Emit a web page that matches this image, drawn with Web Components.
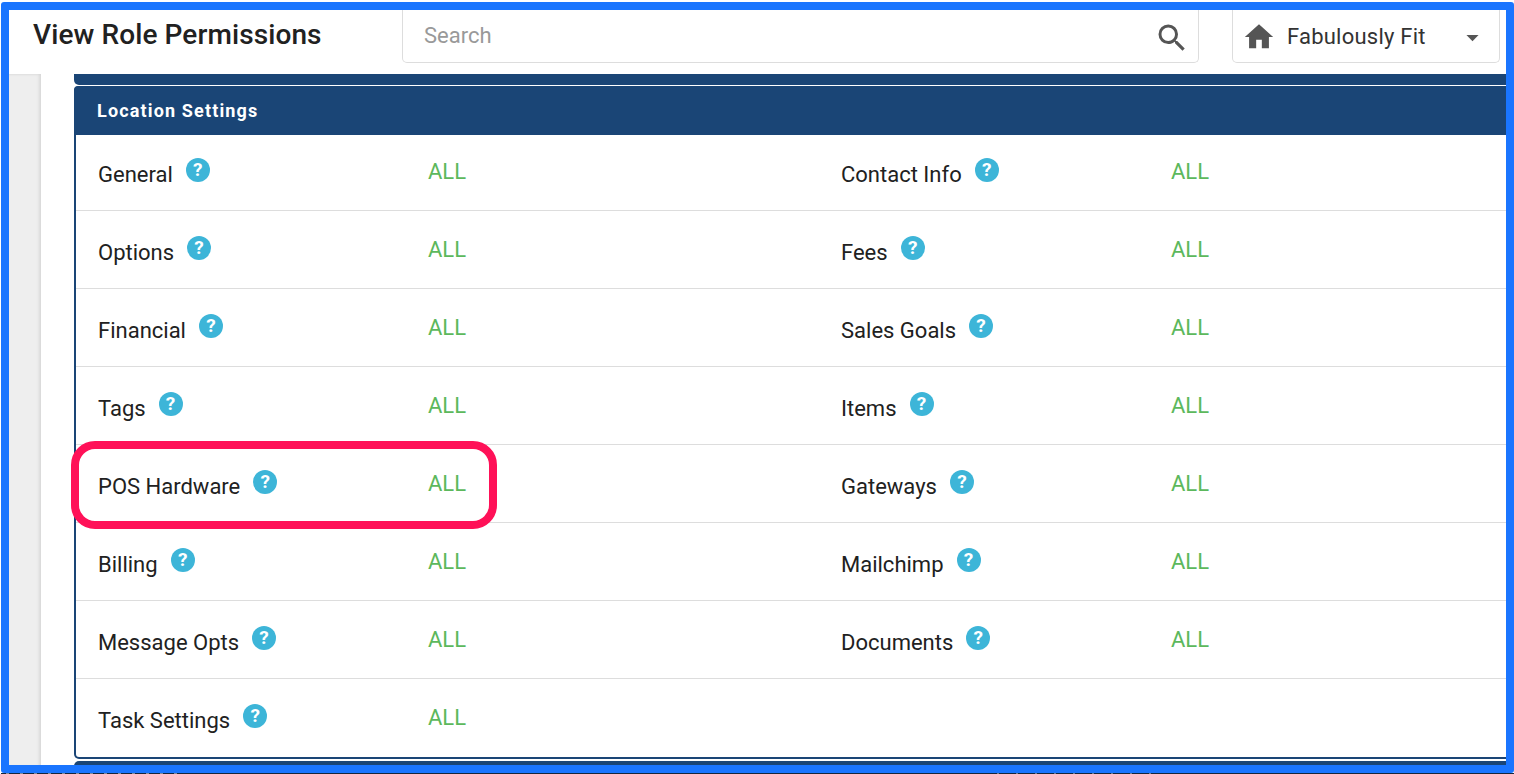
<!DOCTYPE html>
<html>
<head>
<meta charset="utf-8">
<title>View Role Permissions</title>
<style>
  html, body { margin:0; padding:0; height:100%; background:#fff; overflow:hidden; }
  body { font-family:Roboto,"Liberation Sans",sans-serif; }
</style>
</head>
<body>
<rp-frame>
  <rp-topbar slot="top" heading="View Role Permissions">
    <rp-search placeholder="Search"></rp-search>
    <rp-location name="Fabulously Fit"></rp-location>
  </rp-topbar>
  <rp-stub></rp-stub>
  <rp-panel heading="Location Settings">
    <rp-perm first label="General"></rp-perm>
    <rp-perm first label="Contact Info"></rp-perm>
    <rp-perm label="Options"></rp-perm>
    <rp-perm label="Fees"></rp-perm>
    <rp-perm label="Financial"></rp-perm>
    <rp-perm label="Sales Goals"></rp-perm>
    <rp-perm label="Tags"></rp-perm>
    <rp-perm label="Items"></rp-perm>
    <rp-perm label="POS Hardware"></rp-perm>
    <rp-perm label="Gateways"></rp-perm>
    <rp-perm label="Billing"></rp-perm>
    <rp-perm label="Mailchimp"></rp-perm>
    <rp-perm label="Message Opts"></rp-perm>
    <rp-perm label="Documents"></rp-perm>
    <rp-perm last label="Task Settings"></rp-perm>
    <rp-perm last></rp-perm>
  </rp-panel>
  <rp-stub next></rp-stub>
  <rp-callout></rp-callout>
</rp-frame>
<rp-strip></rp-strip>

<script>
(()=>{
  const make = (html)=>{
    const t = document.createElement("template");
    t.innerHTML = html;
    return t;
  };

  class Base extends HTMLElement {
    connectedCallback(){
      if(this.shadowRoot) return;
      this.attachShadow({mode:"open"});
      this.shadowRoot.appendChild(this.constructor.template.content.cloneNode(true));
      this.render();
    }
    render(){}
  }

  class Frame extends Base {
    static template = make(`
      <style>
        :host {
          display:block; box-sizing:border-box; position:relative;
          width:1513px; height:771px; margin:2px 0 0 1px;
          border:8px solid #1a75ff; border-radius:3px;
          background:#fff; overflow:hidden;
        }
        .layout { display:grid; grid-template-rows:64px 1fr; height:100%; }
        .body { display:flex; min-height:0; min-width:0; }
        .rail { flex:0 0 32px; background:#eeeeee; box-shadow:inset -4px 0 3px -2px #d8d8d8, inset 0 2px 2px -1px #dedede; }
        .main { flex:1; min-width:0; padding-left:33px; overflow:hidden; }
      </style>
      <div class="layout">
        <slot name="top"></slot>
        <div class="body">
          <div class="rail"></div>
          <div class="main"><slot></slot></div>
        </div>
      </div>`);
  }

  class Topbar extends Base {
    static template = make(`
      <style>
        :host { display:flex; align-items:flex-start; background:#fff; height:64px; }
        h1 {
          flex:0 0 393px; margin:0; padding:8px 0 0 24px; box-sizing:border-box;
          font:500 28px/34px Roboto,sans-serif; letter-spacing:.1px; color:#212121;
        }
        .tools { display:flex; gap:33px; }
      </style>
      <h1></h1>
      <div class="tools"><slot></slot></div>`);
    render(){ this.shadowRoot.querySelector("h1").textContent = this.getAttribute("heading"); }
  }

  class Search extends Base {
    static template = make(`
      <style>
        :host {
          display:flex; align-items:center; box-sizing:border-box;
          width:797px; height:53px; padding:0 8px 0 21px;
          border:1px solid #dddddd; border-top:0; border-radius:0 0 5px 5px;
        }
        span { flex:1; font:400 22px/26px Roboto,sans-serif; color:#999; }
        svg { width:36px; height:36px; fill:#555; margin-top:4px; }
      </style>
      <span></span>
      <svg viewBox="0 0 24 24"><path d="M15.5 14h-.79l-.28-.27A6.471 6.471 0 0 0 16 9.5 6.5 6.5 0 1 0 9.5 16c1.61 0 3.09-.59 4.23-1.57l.27.28v.79l5 4.99L20.49 19l-4.99-5zm-6 0C7.01 14 5 11.99 5 9.5S7.01 5 9.5 5 14 7.01 14 9.5 11.99 14 9.5 14z"/></svg>`);
    render(){ this.shadowRoot.querySelector("span").textContent = this.getAttribute("placeholder"); }
  }

  class Location extends Base {
    static template = make(`
      <style>
        :host {
          display:flex; align-items:center; box-sizing:border-box;
          width:268px; height:53px; padding:2px 12px 0 11px;
          border:1px solid #dddddd; border-top:0; border-radius:0 0 5px 5px;
        }
        .home { width:34px; height:34px; fill:#555; margin:0 0 0 -2px; }
        span { flex:1; margin-left:11px; font:400 22px/26px Roboto,sans-serif; letter-spacing:.22px; color:#333; }
        .caret { width:29px; height:29px; fill:#555; margin-top:1px; }
      </style>
      <svg class="home" viewBox="0 0 24 24"><path d="M10 20v-6h4v6h5v-8h3L12 3 2 12h3v8z"/></svg>
      <span></span>
      <svg class="caret" viewBox="0 0 24 24"><path d="M7 10l5 5 5-5z"/></svg>`);
    render(){ this.shadowRoot.querySelector("span").textContent = this.getAttribute("name"); }
  }

  // sliver of the panels above and below the one in view
  class Stub extends Base {
    static template = make(`
      <style>
        :host { display:block; width:1488px; height:11px; background:#1a4576; border-radius:0 0 0 5px; margin-bottom:1px; }
        :host([next]) { height:20px; margin:2px 0 0; border-radius:5px 0 0 0; }
      </style>`);
  }

  class Panel extends Base {
    static template = make(`
      <style>
        :host {
          display:block; box-sizing:border-box; width:1488px;
          border:2px solid #1a4576; border-top:0; border-radius:5px;
          background:#fff;
        }
        header {
          margin:0 -2px; height:49px; padding-left:23px; border-radius:4px 0 0 0;
          background:#1a4576; color:#fff;
          font:700 18px/49px Roboto,sans-serif; letter-spacing:1.15px;
        }
        .grid { display:grid; grid-template-columns:743px 743px; }
      </style>
      <header></header>
      <div class="grid"><slot></slot></div>`);
    render(){ this.shadowRoot.querySelector("header").textContent = this.getAttribute("heading"); }
  }

  class Perm extends Base {
    static template = make(`
      <style>
        :host {
          display:grid; grid-template-columns:331px 1fr; align-items:start; box-sizing:border-box;
          height:78px; padding:26px 0 0 22px; border-bottom:1px solid #dddddd;
        }
        :host([first]) { height:76px; padding-top:24px; }
        :host([last]) { border-bottom:0; }
        .name { display:flex; align-items:flex-start; font:400 22px/32px Roboto,sans-serif; color:#212121; }
        .help {
          flex:none; width:24px; height:24px; margin:-1px 0 0 13px; border-radius:50%;
          background:#3db5d8; color:#fff; text-align:center;
          font:700 19px/24px Roboto,sans-serif;
        }
        .value { font:400 22px/26px Roboto,sans-serif; color:#5cb85c; margin-left:-1px; }
      </style>
      <div class="name"></div>
      <div class="value"></div>`);
    render(){
      const label = this.getAttribute("label");
      if(!label) return;
      const name = this.shadowRoot.querySelector(".name");
      name.textContent = label;
      const help = document.createElement("span");
      help.className = "help";
      help.textContent = "?";
      name.appendChild(help);
      this.shadowRoot.querySelector(".value").textContent = "ALL";
    }
  }

  // annotation drawn over the page
  class Callout extends Base {
    static template = make(`
      <style>
        :host {
          position:absolute; left:62px; top:431px; width:426px; height:88px;
          box-sizing:border-box; border:8px solid #ff1158; border-radius:24px;
          pointer-events:none;
        }
      </style>`);
  }

  // the page behind the screenshot shows for one row of pixels
  class Strip extends Base {
    static template = make(`
      <style>
        :host {
          display:block; height:1px; margin-left:1px;
          background:
            repeating-linear-gradient(90deg,#7f8a9c 0 3px,#16263c 3px 14px) 5px 0/180px 1px no-repeat,
            repeating-linear-gradient(90deg,#6f7b90 0 2px,#16263c 2px 19px) 996px 0/170px 1px no-repeat,
            #16263c;
        }
      </style>`);
  }

  customElements.define("rp-frame",Frame);
  customElements.define("rp-topbar",Topbar);
  customElements.define("rp-search",Search);
  customElements.define("rp-location",Location);
  customElements.define("rp-stub",Stub);
  customElements.define("rp-panel",Panel);
  customElements.define("rp-perm",Perm);
  customElements.define("rp-callout",Callout);
  customElements.define("rp-strip",Strip);
})();
</script>
</body>
</html>
